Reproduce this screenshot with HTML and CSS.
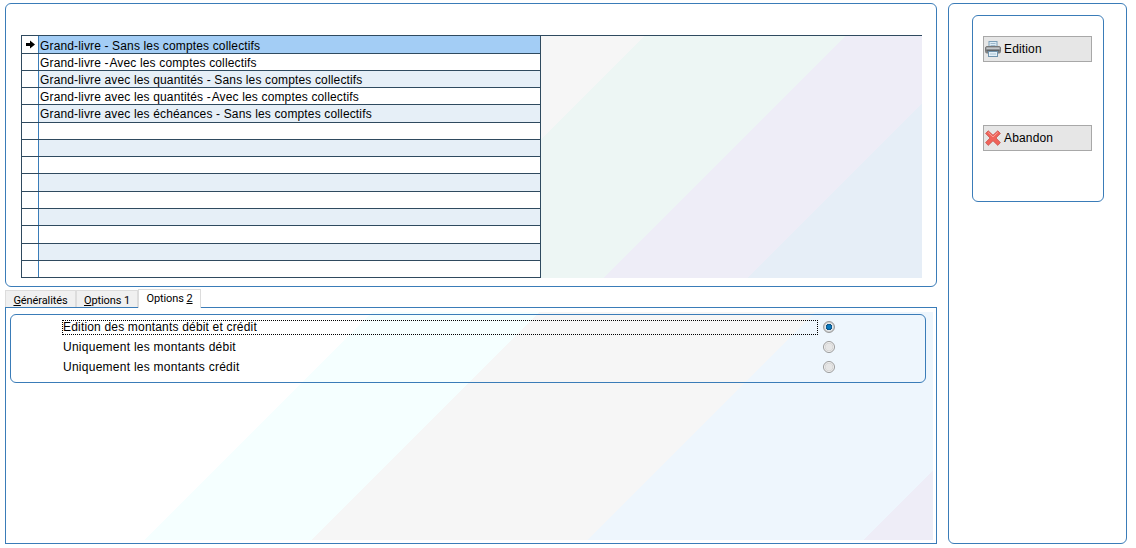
FILE: index.html
```html
<!DOCTYPE html>
<html lang="fr">
<head>
<meta charset="utf-8">
<title>Grand-livre</title>
<link rel="stylesheet" href="styles.css">
</head>
<body>
<div class="page">
  <div class="main">
    <section class="panel list-panel">
      <div class="table">
        <div class="grid">
          <div class="row tall selected"><span class="sel"><svg class="arrow" viewBox="0 0 9 9"><path d="M0 3H4V0.5L9 4.5L4 8.5V6H0Z" fill="#000"/></svg></span><span class="cell">Grand-livre - Sans les comptes collectifs</span></div>
          <div class="row"><span class="sel"></span><span class="cell">Grand-livre <span class="kern">- </span>Avec les comptes collectifs</span></div>
          <div class="row alt"><span class="sel"></span><span class="cell">Grand-livre avec les quantités - Sans les comptes collectifs</span></div>
          <div class="row"><span class="sel"></span><span class="cell">Grand-livre avec les quantités <span class="kern">- </span>Avec les comptes collectifs</span></div>
          <div class="row tall alt"><span class="sel"></span><span class="cell">Grand-livre avec les échéances - Sans les comptes collectifs</span></div>
          <div class="row"><span class="sel"></span><span class="cell"></span></div>
          <div class="row alt"><span class="sel"></span><span class="cell"></span></div>
          <div class="row"><span class="sel"></span><span class="cell"></span></div>
          <div class="row tall alt"><span class="sel"></span><span class="cell"></span></div>
          <div class="row"><span class="sel"></span><span class="cell"></span></div>
          <div class="row alt"><span class="sel"></span><span class="cell"></span></div>
          <div class="row tall"><span class="sel"></span><span class="cell"></span></div>
          <div class="row alt"><span class="sel"></span><span class="cell"></span></div>
          <div class="row"><span class="sel"></span><span class="cell"></span></div>
        </div>
        <div class="table-bg"></div>
      </div>
    </section>

    <div class="tabs">
      <div class="tab"><u>G</u>énéralités</div>
      <div class="tab"><u>O</u>ptions 1</div>
      <div class="tab active">Options <u>2</u></div>
    </div>

    <section class="panel tab-panel">
      <div class="tab-inner">
        <div class="group">
          <div class="opt"><span class="opt-label focus">Edition des montants débit et crédit</span><span class="radio on"></span></div>
          <div class="opt"><span class="opt-label">Uniquement les montants débit</span><span class="radio"></span></div>
          <div class="opt"><span class="opt-label">Uniquement les montants crédit</span><span class="radio"></span></div>
        </div>
      </div>
    </section>
  </div>

  <aside class="panel side">
    <div class="actions">
      <button class="btn" type="button">
        <svg class="ico" viewBox="0 0 16 16">
          <rect x="4" y="0.5" width="8" height="6" fill="#dcecf6" stroke="#7d9fb8"/>
          <path d="M5.5 2.5H10.5M5.5 4.5H10.5" stroke="#9db8cc"/>
          <rect x="0.5" y="5.5" width="15" height="6.5" rx="1.5" fill="#8b8f93" stroke="#777"/>
          <rect x="1.5" y="6.5" width="13" height="1.5" fill="#c4c7ca"/>
          <rect x="1.5" y="9" width="13" height="1.5" fill="#5f6367"/>
          <rect x="3.5" y="10.5" width="9" height="5" fill="#e4f0f8" stroke="#6f93ad"/>
          <path d="M5 13H11" stroke="#a8c2d4"/>
        </svg>
        <span>Edition</span>
      </button>
      <button class="btn" type="button">
        <svg class="ico" viewBox="0 0 16 16">
          <path d="M3.2 0.8L8 5.2L12.8 0.8L15.4 3.4L11 8L15.4 12.6L12.8 15.4L8 10.8L3.2 15.4L0.6 12.6L5 8L0.6 3.4Z" fill="#f0635a" stroke="#c9564e" stroke-width="0.8" stroke-linejoin="round"/>
          <path d="M3.2 2.4L8 7L12.8 2.4" fill="none" stroke="#fb9f97" stroke-width="1"/>
        </svg>
        <span>Abandon</span>
      </button>
    </div>
  </aside>
</div>
</body>
</html>
```
FILE: styles.css
```css
* { box-sizing: border-box; }

html, body {
  margin: 0;
  height: 100%;
  background: #fff;
}

body {
  font-family: "Liberation Sans", Arial, sans-serif;
  font-size: 12px;
  letter-spacing: 0.15px;
  color: #000;
  overflow: hidden;
}

.page {
  display: flex;
  align-items: flex-start;
  gap: 11px;
  padding: 3px 0 0 5px;
}

.main {
  display: flex;
  flex-direction: column;
  width: 932px;
}

.panel {
  border: 1px solid #3a7cb8;
  border-radius: 6px;
  background: #fff;
}

.list-panel {
  height: 284px;
  padding: 31px 14px 0 15px;
}

.table {
  display: flex;
  height: 243px;
  border-top: 1px solid #2f4a5f;
}

.grid {
  width: 520px;
  border-left: 1px solid #2f4a5f;
  border-right: 1px solid #2f4a5f;
}

.table-bg {
  flex: 1;
  background: linear-gradient(135deg,
    #f6f6f6 73.5px,
    #edf6f4 73.5px 215px,
    #eeedf7 215px 317px,
    #e6eef7 317px);
}

.row {
  display: flex;
  height: 17px;
  border-bottom: 1px solid #2f4a5f;
  background: #fff;
  line-height: 16px;
}

.row.tall { height: 18px; }
.row.alt { background: #e6eff7; }

.sel {
  display: flex;
  align-items: center;
  justify-content: center;
  width: 17px;
  padding-left: 1px;
  border-right: 1px solid #3a7cb8;
  background: #fff;
}

.cell {
  flex: 1;
  padding: 1px 0 0 1px;
  white-space: nowrap;
}

.kern { letter-spacing: -1.2px; }

.selected .cell {
  padding-top: 2px;
  background: #a3cdf5;
}

.arrow {
  display: block;
  width: 9px;
  height: 9px;
}

.tabs {
  display: flex;
  align-items: flex-end;
  height: 20px;
  font-family: Roboto, "Liberation Sans", sans-serif;
  font-size: 11px;
  letter-spacing: -0.1px;
}

.tab {
  width: 62px;
  height: 17px;
  border: 1px solid #dcdcdc;
  border-bottom: 0;
  background: #f0f0f0;
  text-align: center;
  line-height: 19px;
  white-space: nowrap;
}

.tab:first-child { width: 71px; }

.tab.active {
  position: relative;
  width: 63px;
  height: 19px;
  margin-bottom: -1px;
  background: #fff;
  line-height: 17px;
}

.tab-panel {
  height: 237px;
  padding: 4px 3px 3px 2px;
  border-radius: 0;
}

.tab-inner {
  height: 228px;
  padding: 2px 7px 0 2px;
  background: linear-gradient(135deg,
    #fff 258px,
    #f5ffff 258px 376px,
    #f6f6f6 376px 571px,
    #eef6fd 571px 766.5px,
    #eeedf7 766.5px);
}

.group {
  height: 69px;
  padding: 2px 0 0 51px;
  border: 1px solid #3a7cb8;
  border-radius: 6px;
}

.opt {
  display: flex;
  align-items: center;
  height: 20px;
}

.opt-label {
  width: 756px;
  height: 15px;
  padding-left: 1px;
  line-height: 14px;
  letter-spacing: 0.26px;
  white-space: nowrap;
}

.opt-label.focus {
  padding-left: 0;
  border: 1px dotted #000;
  line-height: 12px;
  letter-spacing: 0.18px;
}

.radio {
  width: 12px;
  height: 12px;
  margin-left: 5px;
  border: 1px solid #9a9a9a;
  border-radius: 50%;
  background: radial-gradient(circle at 50% 50%, #e6e6e6 0 3px, #d2d2d2 4px, #f6f6f6 4.6px);
}

.radio.on {
  background: radial-gradient(circle at 50% 50%, #0a7ac0 0 1.5px, #0d4f80 3px, #e6ebef 3.5px, #c8c8c8 5px);
}

.side {
  width: 179px;
  height: 541px;
  padding: 11px 22px 0 23px;
}

.actions {
  display: flex;
  flex-direction: column;
  gap: 63px;
  height: 187px;
  padding: 20px 11px 0 10px;
  border: 1px solid #3a7cb8;
  border-radius: 6px;
}

.btn {
  display: flex;
  align-items: center;
  gap: 3px;
  width: 109px;
  height: 26px;
  padding: 0 0 0 1px;
  border: 1px solid #a8a8a8;
  background: #e6e6e6;
  color: #000;
  font: inherit;
  letter-spacing: inherit;
  text-align: left;
}

.ico {
  display: block;
  flex: none;
  width: 16px;
  height: 16px;
}
```
